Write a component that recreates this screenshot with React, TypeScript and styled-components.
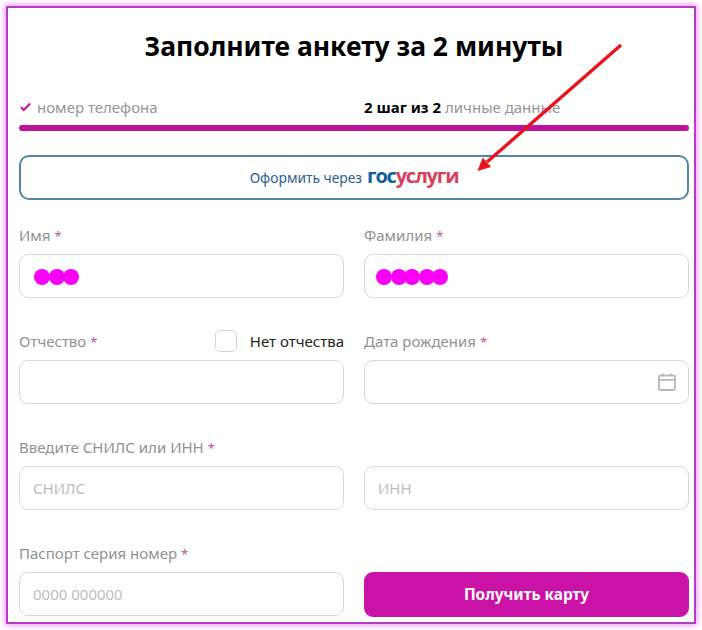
import React from "react";
import styled, { createGlobalStyle } from "styled-components";

const GlobalStyle = createGlobalStyle`
  html, body {
    margin: 0;
    padding: 0;
    background: #fff;
  }
  body {
    font-family: "Noto Sans", "Open Sans", sans-serif;
  }
`;

type FieldData = {
  label?: string;
  placeholder?: string;
  blobs?: number[];
  noPatronymic?: boolean;
  calendar?: boolean;
};

const BRAND = "#c912a3";

export default function App() {
  return (
    <Page>
      <GlobalStyle />
      <Frame>
        <Title>Заполните анкету за 2 минуты</Title>
        <Steps>
          <Step>
            <CheckIcon />
            <span>номер телефона</span>
          </Step>
          <Step>
            <span>
              <b>2 шаг из 2</b> личные данные
            </span>
          </Step>
        </Steps>
        <Progress />
        <GosButton>
          Оформить через
          <GosLogo>
            <span>гос</span>
            <em>услуги</em>
          </GosLogo>
        </GosButton>
        <FormGrid>
          <Field label="Имя" blobs={[0, 15, 29]} />
          <Field label="Фамилия" blobs={[-3, 12, 25, 40, 53]} />
          <Field label="Отчество" noPatronymic />
          <Field label="Дата рождения" calendar />
          <Field label="Введите СНИЛС или ИНН" placeholder="СНИЛС" />
          <Field placeholder="ИНН" />
          <Field label="Паспорт серия номер" placeholder="0000 000000" />
          <FieldBox>
            <LabelRow />
            <SubmitButton>Получить карту</SubmitButton>
          </FieldBox>
        </FormGrid>
        <Arrow />
      </Frame>
    </Page>
  );
}

const Field = ({ label, placeholder, blobs, noPatronymic, calendar }: FieldData) => (
  <FieldBox>
    <LabelRow>
      {label && (
        <Label>
          {label} <Star>*</Star>
        </Label>
      )}
      {noPatronymic && (
        <CheckLabel>
          <CheckBox />
          Нет отчества
        </CheckLabel>
      )}
    </LabelRow>
    <InputBox>
      {placeholder && <Placeholder>{placeholder}</Placeholder>}
      {blobs && (
        <Blobs>
          {blobs.map((x) => (
            <Blob key={x} style={{ left: x }} />
          ))}
        </Blobs>
      )}
      {calendar && <CalendarIcon />}
    </InputBox>
  </FieldBox>
);

const CheckIcon = () => (
  <CheckSvg viewBox="0 0 12 10">
    <path d="M1.5 5.2 L4.3 8 L10.6 1.6" fill="none" stroke={BRAND} strokeWidth="2.2" />
  </CheckSvg>
);

const CalendarIcon = () => (
  <CalendarSvg viewBox="0 0 18 18">
    <g fill="none" stroke="#b8b8b8" strokeWidth="1.8">
      <rect x="1" y="2.5" width="16" height="14.5" rx="1.5" />
      <path d="M1 6.8 H17 M5 0.5 V3 M13 0.5 V3" />
    </g>
  </CalendarSvg>
);

const Arrow = () => (
  <ArrowSvg viewBox="0 0 702 630">
    <path d="M621 45 L487 162" stroke="#e8141c" strokeWidth="3.4" fill="none" />
    <polygon points="477.5,171 482.7,157.5 491,167" fill="#e8141c" />
  </ArrowSvg>
);

const Page = styled.div`
  padding: 6px;
  width: 702px;
  height: 630px;
  box-sizing: border-box;
  overflow: hidden;
`;

const Frame = styled.main`
  position: relative;
  box-sizing: border-box;
  width: 690px;
  height: 618px;
  padding: 0 5px 0 11px;
  border: 2px solid #b23cc2;
  box-shadow: 0 0 6px 1px #f08cf6;
  background: #fff;
`;

const Title = styled.h1`
  margin: 0;
  padding-top: 19px;
  height: 61px;
  box-sizing: content-box;
  font-size: 26.5px;
  line-height: 38px;
  font-weight: 700;
  text-align: center;
  color: #000;
`;

const Steps = styled.div`
  display: grid;
  grid-template-columns: 325px 325px;
  column-gap: 20px;
  margin-top: 7px;
`;

const Step = styled.div`
  display: flex;
  align-items: center;
  gap: 5px;
  height: 24px;
  font-size: 15px;
  color: #959595;
  white-space: pre;

  b {
    color: #000;
    font-weight: 700;
  }
`;

const CheckSvg = styled.svg`
  width: 13px;
  height: 10px;
`;

const Progress = styled.div`
  height: 6px;
  margin-top: 6px;
  width: 670px;
  border-radius: 3px;
  background: #bc14a0;
`;

const GosButton = styled.div`
  display: flex;
  align-items: center;
  justify-content: center;
  gap: 5px;
  box-sizing: border-box;
  width: 670px;
  height: 45px;
  margin-top: 24px;
  border: 2px solid #5285a6;
  border-radius: 10px;
  font-size: 13.8px;
  color: #2b5f8c;
`;

const GosLogo = styled.span`
  font-family: "Open Sans", sans-serif;
  font-size: 20px;
  font-weight: 700;
  letter-spacing: -1.2px;
  line-height: 20px;
  color: #0f5f9c;
  position: relative;
  top: -2px;

  em {
    font-style: normal;
    color: #d9405e;
  }
`;

const FormGrid = styled.div`
  display: grid;
  grid-template-columns: 325px 325px;
  column-gap: 20px;
  row-gap: 31px;
  margin-top: 23px;
`;

const FieldBox = styled.div`
  display: flex;
  flex-direction: column;
  gap: 7px;
`;

const LabelRow = styled.div`
  display: flex;
  align-items: center;
  justify-content: space-between;
  height: 24px;
`;

const Label = styled.span`
  font-size: 15px;
  color: #919191;
`;

const Star = styled.span`
  color: #b8559c;
  font-size: 13px;
`;

const CheckLabel = styled.label`
  display: flex;
  align-items: center;
  gap: 13px;
  font-size: 15px;
  color: #222;
`;

const CheckBox = styled.span`
  box-sizing: border-box;
  width: 22px;
  height: 22px;
  border: 1px solid #d4d4d4;
  border-radius: 5px;
`;

const InputBox = styled.div`
  position: relative;
  display: flex;
  align-items: center;
  justify-content: space-between;
  box-sizing: border-box;
  height: 44px;
  padding: 0 12px 0 13px;
  border: 1px solid #d8d8d8;
  border-radius: 9px;
  background: #fff;
`;

const Placeholder = styled.span`
  font-size: 15px;
  color: #bdbdbd;
`;

const Blobs = styled.div`
  position: relative;
  top: 1px;
  left: 1px;
  height: 16px;
  width: 100%;
`;

const Blob = styled.span`
  position: absolute;
  top: 0;
  width: 16px;
  height: 16px;
  border-radius: 50%;
  background: #f700f5;
`;

const CalendarSvg = styled.svg`
  width: 18px;
  height: 18px;
  margin-left: auto;
`;

const SubmitButton = styled.div`
  display: flex;
  align-items: center;
  justify-content: center;
  height: 45px;
  border-radius: 9px;
  background: #cb12a6;
  color: #fff;
  font-size: 15.4px;
  font-weight: 700;
`;

const ArrowSvg = styled.svg`
  position: absolute;
  left: -8px;
  top: -8px;
  width: 702px;
  height: 630px;
  pointer-events: none;
`;
